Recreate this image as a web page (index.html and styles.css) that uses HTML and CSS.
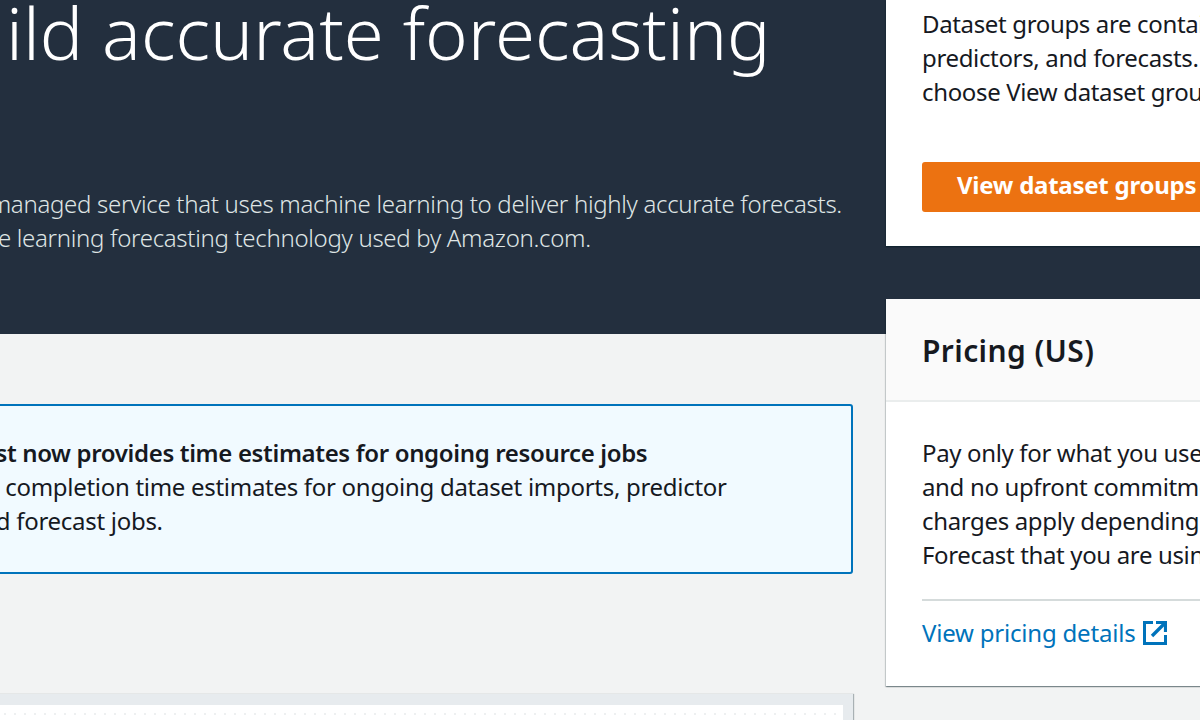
FILE: index.html
```html
<!DOCTYPE html>
<html lang="en">
<head>
<meta charset="utf-8">
<title>Amazon Forecast</title>
<link rel="stylesheet" href="styles.css">
</head>
<body>
<div class="page">
  <div class="hero-bg"></div>
  <header class="hero-text">
    <h1 class="title">Build accurate forecasting</h1>
    <p class="lede">Amazon Forecast is a fully managed service that uses machine learning to deliver highly accurate forecasts.<br>This uses the same machine learning forecasting technology used by Amazon.com.</p>
  </header>
  <aside class="side">
    <section class="card card-start">
      <div class="card-body">
        <p class="copy">Dataset groups are containers for datasets,<br>predictors, and forecasts. To get started,<br>choose View dataset groups.</p>
        <button class="primary" type="button">View dataset groups</button>
      </div>
    </section>
    <section class="card card-pricing">
      <h2 class="card-head">Pricing (US)</h2>
      <div class="card-body pricing-body">
        <p class="copy">Pay only for what you use. There is no minimum fee<br>and no upfront commitments. Additional<br>charges apply depending on the features of Amazon<br>Forecast that you are using.</p>
        <div class="card-foot">
          <a class="link" href="#">View pricing details
            <svg class="ext" viewBox="0 0 24 24" width="24" height="24" aria-hidden="true"><path d="M10 1.5H1.5v21h21V14" fill="none" stroke="currentColor" stroke-width="3"/><path d="M13 1.5h9.500v9.500" fill="none" stroke="currentColor" stroke-width="3.200"/><path d="M21.500 2.500 9 15" fill="none" stroke="currentColor" stroke-width="3.400"/></svg>
          </a>
        </div>
      </div>
    </section>
  </aside>
  <main class="main">
    <div class="alert">
      <p class="alert-title">Amazon Forecast now provides time estimates for ongoing resource jobs</p>
      <p class="alert-copy">You can now see completion time estimates for ongoing dataset imports, predictor</p>
      <p class="alert-copy alert-last">training, and forecast jobs.</p>
    </div>
    <div class="panel"><div class="panel-inner"></div></div>
  </main>
</div>
</body>
</html>
```
FILE: styles.css
```css
* { box-sizing: border-box; }
html, body { margin: 0; padding: 0; }
body { font-family: "Noto Sans", "Open Sans", sans-serif; color: #16191f; }
.page {
  width: 1200px;
  height: 720px;
  overflow: hidden;
  background: #f2f3f3;
  display: grid;
  grid-template-columns: 886px 400px;
  grid-template-rows: 334px 386px;
}
.hero-bg { grid-column: 1 / -1; grid-row: 1; background: #232f3e; }
.hero-text { grid-column: 1; grid-row: 1; min-width: 0; color: #fff; white-space: nowrap; }
.title {
  margin: -10px 0 0 -83px;
  font-size: 72.5px;
  line-height: 84px;
  font-weight: 300;
}
.lede {
  margin: 113px 0 0 -288px;
  font-size: 24px;
  line-height: 34px;
  font-weight: 300;
  letter-spacing: -.3px;
  color: #dfe5e5;
}
.side { grid-column: 2; grid-row: 1 / span 2; min-width: 0; display: flex; flex-direction: column; gap: 53px; }
.card { background: #fff; box-shadow: 0 1px 1px 0 rgba(0,28,36,.3), 1px 1px 1px 0 rgba(0,28,36,.15), -1px 1px 1px 0 rgba(0,28,36,.15); }
.card-start { height: 246px; }
.card-start .card-body { padding: 7px 36px 0; }
.copy { margin: 0; font-size: 24px; line-height: 34px; white-space: nowrap; letter-spacing: -.35px; }
.primary {
  display: block;
  width: 100%;
  height: 50px;
  margin-top: 53px;
  padding: 0 35px 5px;
  border: 0;
  border-radius: 3px;
  background: #ec7211;
  color: #fff;
  font: 700 24px/34px "Noto Sans", sans-serif;
  letter-spacing: -.25px;
  text-align: left;
}
.card-pricing { height: 387px; }
.card-head {
  margin: 0;
  height: 103px;
  padding: 35px 36px 0;
  background: #fafafa;
  border-bottom: 2px solid #eaeded;
  font-size: 30px;
  line-height: 34px;
  font-weight: 600;
  letter-spacing: .4px;
}
.pricing-body { padding: 34px 36px 0; }
.card-foot { margin-top: 27px; border-top: 2px solid #d5dbdb; padding-top: 15px; }
.link { color: #0073bb; text-decoration: none; font-size: 24px; line-height: 34px; letter-spacing: -.2px; display: inline-flex; align-items: center; gap: 8px; white-space: nowrap; }
.main { grid-column: 1; grid-row: 2; min-width: 0; padding: 70px 0 0; }
.alert {
  margin: 0 33px 0 -200px;
  height: 170px;
  padding: 30px 0 0 0;
  background: #f1faff;
  border: 2px solid #0073bb;
  border-radius: 3px;
  white-space: nowrap;
  font-size: 24px;
  line-height: 34px;
}
.alert-title { margin: 0 0 0 19px; font-weight: 600; letter-spacing: -.35px; }
.alert-copy { margin: 0 0 0 15px; letter-spacing: -.29px; }
.alert-last { margin-left: 68px; }
.panel {
  margin: 120px 33px 0 -200px;
  height: 100px;
  background: #e7ebee;
  padding: 11px 10px 0 0;
  box-shadow: 1px 0 1px rgba(0,28,36,.3);
}
.panel-inner {
  height: 100%;
  background: radial-gradient(circle, #eef0f1 1px, transparent 1.5px) 0 4px / 10px 10px repeat-x #fff;
  box-shadow: 0 0 2px #e7ebee;
}
```
